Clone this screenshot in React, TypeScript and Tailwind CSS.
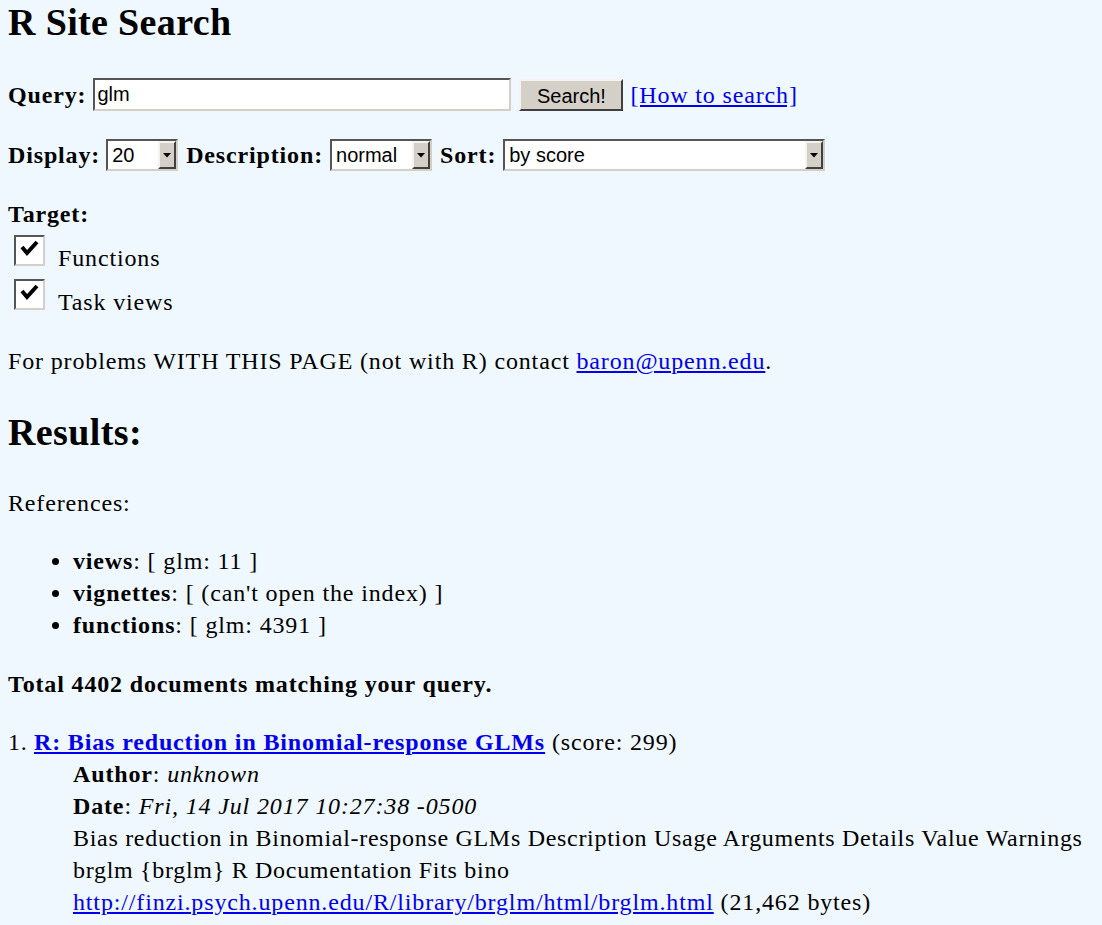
import React from "react";

const sunken =
  "border-2 border-t-[#555555] border-l-[#555555] border-b-[#d4d0c8] border-r-[#d4d0c8] bg-white";
const raised =
  "border-2 border-t-[#f4f3ef] border-l-[#f4f3ef] border-b-[#404040] border-r-[#404040] bg-[#d4d0c8]";

function Select({ value, width }: { value: string; width: string }) {
  return (
    <div className={`flex h-[32px] items-stretch tracking-normal ${sunken} ${width}`}>
      <span className="flex-1 pl-[4px] font-['Liberation_Sans',sans-serif] text-[20px] leading-[28px]">
        {value}
      </span>
      <span className={`flex w-[18px] items-center justify-center ${raised}`}>
        <svg width="8" height="5" viewBox="0 0 8 5">
          <path d="M0 0h8L4 4.5z" fill="#000" />
        </svg>
      </span>
    </div>
  );
}

function Checkbox() {
  return (
    <span className={`h-[31px] w-[31px] shrink-0 ${sunken}`}>
      <svg width="27" height="27" viewBox="0 0 27 27">
        <polyline points="6,10 11,16 21,5" fill="none" stroke="#000" strokeWidth="4" />
      </svg>
    </span>
  );
}

export default function App() {
  return (
    <div className="min-h-screen bg-[#F0F8FF] px-2 font-['Liberation_Serif',serif] text-[24px] tracking-[0.85px] text-black">
      <h1 className="text-[38px] font-bold leading-[44px] tracking-[0.35px]">R Site Search</h1>

      <div className="mt-[34px] flex h-[33px] items-center">
        <span className="font-bold">Query:</span>
        <input
          defaultValue="glm"
          className={`ml-[7px] h-[33px] w-[418px] px-[2px] font-['Liberation_Sans',sans-serif] text-[20px] tracking-normal outline-none ${sunken}`}
        />
        <button
          className={`ml-[8px] h-[32px] w-[104px] font-['Liberation_Sans',sans-serif] text-[20px] tracking-normal ${raised}`}
        >
          Search!
        </button>
        <a href="#" className="ml-[7px] text-[#0000EE] underline">
          [How to search]
        </a>
      </div>

      <div className="mt-[26px] flex items-center">
        <span className="mr-[6px] font-bold">Display:</span>
        <Select value="20" width="w-[72px]" />
        <span className="ml-[8px] mr-[7px] font-bold">Description:</span>
        <Select value="normal" width="w-[102px]" />
        <span className="ml-[8px] mr-[7px] font-bold">Sort:</span>
        <Select value="by score" width="w-[322px]" />
      </div>

      <div className="mt-[28px] font-bold leading-[26px]">Target:</div>
      <div className="mt-[8px] ml-[6px] flex">
        <Checkbox />
        <span className="ml-[13px] mt-[10px] leading-[26px]">Functions</span>
      </div>
      <div className="mt-[8px] ml-[6px] flex">
        <Checkbox />
        <span className="ml-[13px] mt-[10px] leading-[26px]">Task views</span>
      </div>

      <p className="mt-[33px] leading-[26px]">
        For problems WITH THIS PAGE (not with R) contact{" "}
        <a href="#" className="text-[#0000EE] underline">
          baron@upenn.edu
        </a>
        .
      </p>

      <h2 className="mt-[36px] text-[38px] font-bold leading-[44px] tracking-[0.4px]">Results:</h2>

      <p className="mt-[36px] leading-[26px]">References:</p>
      <ul className="mt-[29px] list-disc pl-[65px] leading-[32px]">
        <li>
          <b>views</b>: [ glm: 11 ]
        </li>
        <li>
          <b>vignettes</b>: [ (can't open the index) ]
        </li>
        <li>
          <b>functions</b>: [ glm: 4391 ]
        </li>
      </ul>

      <p className="mt-[30px] font-bold leading-[26px]">Total 4402 documents matching your query.</p>

      <div className="mt-[29px] leading-[32px]">
        <div className="flex">
          <span className="w-[26px] shrink-0">1.</span>
          <span>
            <a href="#" className="font-bold text-[#0000EE] underline">
              R: Bias reduction in Binomial-response GLMs
            </a>{" "}
            (score: 299)
          </span>
        </div>
        <div className="pl-[65px]">
          <div>
            <b>Author</b>: <i>unknown</i>
          </div>
          <div>
            <b>Date</b>: <i>Fri, 14 Jul 2017 10:27:38 -0500</i>
          </div>
          <div className="whitespace-nowrap tracking-[0.7px]">
            Bias reduction in Binomial-response GLMs Description Usage Arguments Details Value Warnings
            <br />
            brglm {"{brglm}"} R Documentation Fits bino
          </div>
          <div>
            <a href="#" className="text-[#0000EE] underline">
              http://finzi.psych.upenn.edu/R/library/brglm/html/brglm.html
            </a>{" "}
            (21,462 bytes)
          </div>
        </div>
      </div>
    </div>
  );
}
